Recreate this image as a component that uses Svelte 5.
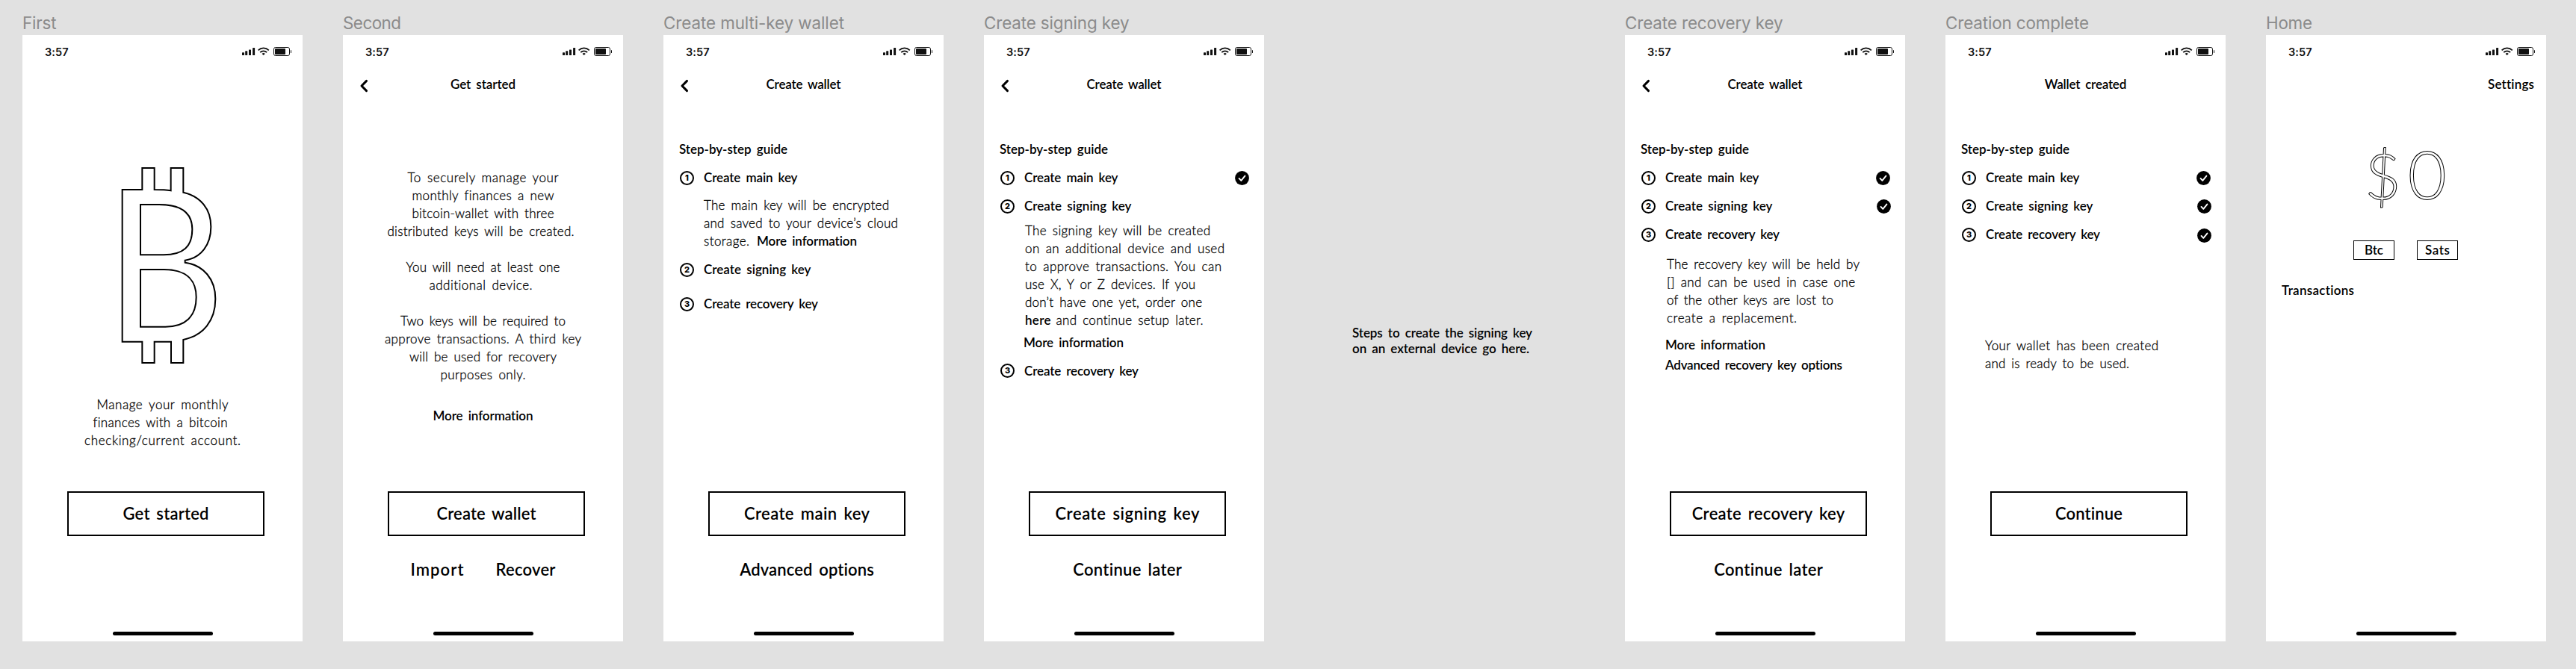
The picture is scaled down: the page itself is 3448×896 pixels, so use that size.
<script>
  // Spreads the letters of a line so that it fills the given width.
  function fit(node, width) {
    if (!width) return;
    const natural = node.getBoundingClientRect().width;
    const gaps = Math.max(1, node.textContent.length - 1);
    const spacing = (width - natural) / gaps;
    node.style.letterSpacing = `${spacing}px`;
    node.style.marginRight = `${-spacing}px`;
  }

  const guide = { kind: 'heading', gap: 51, x: 21, text: 'Step-by-step guide', w: 145 };
  const step = (n, gap, check = 0, drop = 0) => ({
    kind: 'step', n, gap, check, drop,
    text: ['Create main key', 'Create signing key', 'Create recovery key'][n - 1],
    w: [125.5, 143.5, 153][n - 1]
  });
  const para = (gap, x, ...lines) => ({ kind: 'para', gap, x, lines });
  const link = (gap, x, text, w) => ({ kind: 'heading', gap, x, text, w });
  const centred = (gap, ...lines) => ({ kind: 'centred', gap, lines });
  const line = (t, w, trail = false) => ({ trail, runs: [{ t, w }] });
  const blank = { trail: false, runs: [] };

  const screens = [
    {
      name: 'First', nameW: 45.5,
      blocks: [
        { kind: 'logo', gap: 86.3 },
        centred(42,
          line('Manage your monthly', 176),
          line('finances with a bitcoin', 180, true),
          line('checking/current account.', 209))
      ],
      button: ['Get started', 115], links: []
    },
    {
      name: 'Second', nameW: 78, back: true, title: ['Get started', 87],
      blocks: [
        centred(89.4,
          line('To securely manage your', 202),
          line('monthly finances a new', 190),
          line('bitcoin-wallet with three', 190),
          line('distributed keys will be created.', 250, true),
          blank,
          line('You will need at least one', 206),
          line('additional device.', 138, true),
          blank,
          line('Two keys will be required to', 221),
          line('approve transactions. A third key', 263),
          line('will be used for recovery', 197),
          line('purposes only.', 114)),
        { ...centred(30.4, line('More information', 134)), strong: true }
      ],
      button: ['Create wallet', 133], links: [['Import', 71], ['Recover', 80]]
    },
    {
      name: 'Create multi-key wallet', nameW: 242, back: true, title: ['Create wallet', 100],
      blocks: [
        guide,
        step(1, 14.4),
        para(12.2, 54,
          line('The main key will be encrypted', 248),
          line('and saved to your device’s cloud', 260),
          { runs: [{ t: 'storage.', w: 61 }, { t: 'More information', w: 134, b: true, lead: 10 }] }),
        step(2, 14.8),
        step(3, 22)
      ],
      button: ['Create main key', 168], links: [['Advanced options', 180]]
    },
    {
      name: 'Create signing key', nameW: 194.5, back: true, title: ['Create wallet', 100],
      blocks: [
        guide,
        step(1, 14.4, 346),
        step(2, 14),
        para(8.3, 55,
          line('The signing key will be created', 248),
          line('on an additional device and used', 267),
          line('to approve transactions. You can', 263),
          line('use X, Y or Z devices. If you', 228),
          line('don’t have one yet, order one', 237),
          { runs: [{ t: 'here', w: 34.5, b: true }, { t: 'and continue setup later.', w: 197, lead: 7 }] }),
        link(6.7, 53, 'More information', 134),
        step(3, 13.6)
      ],
      button: ['Create signing key', 193], links: [['Continue later', 146]]
    },
    { note: [['Steps to create the signing key', 241], ['on an external device go here.', 237]] },
    {
      name: 'Create recovery key', nameW: 211.5, back: true, title: ['Create wallet', 100],
      blocks: [
        guide,
        step(1, 14.4, 346),
        step(2, 14, 347),
        step(3, 14),
        para(15.6, 56,
          line('The recovery key will be held by', 258),
          line('[] and can be used in case one', 252),
          line('of the other keys are lost to', 223),
          line('create a replacement.', 174)),
        link(12.2, 54, 'More information', 134),
        link(3, 54, 'Advanced recovery key options', 237)
      ],
      button: ['Create recovery key', 204.5], links: [['Continue later', 146]]
    },
    {
      name: 'Creation complete', nameW: 192, title: ['Wallet created', 109.5],
      blocks: [
        guide,
        step(1, 14.4, 346),
        step(2, 14, 347),
        step(3, 14, 347, 1),
        para(124.5, 53,
          line('Your wallet has been created', 232),
          line('and is ready to be used.', 193))
      ],
      button: ['Continue', 90.5], links: []
    },
    {
      name: 'Home', nameW: 62, action: ['Settings', 62],
      blocks: [
        { kind: 'amount', gap: 44.8 },
        { kind: 'units', gap: 40.2 },
        link(29.4, 21, 'Transactions', 97)
      ],
      links: []
    }
  ];
</script>

{#snippet fitted(text, w)}<span class="fit" use:fit={w}>{text}</span>{/snippet}

{#snippet textLine(l)}
  <div class="line" class:trail={l.trail}>
    {#each l.runs as r}<span class="run" class:strong={r.b} style:margin-left={r.lead ? `${r.lead}px` : null}>{@render fitted(r.t, r.w)}</span>{/each}
  </div>
{/snippet}

<main class="board">
  {#each screens as s}
    {#if s.note}
      <aside class="note">
        {#each s.note as [t, w]}<div>{@render fitted(t, w)}</div>{/each}
      </aside>
    {:else}
      <section class="frame">
        <h2 class="name">{@render fitted(s.name, s.nameW)}</h2>
        <div class="phone">
          <header class="status">
            <span class="time">{@render fitted('3:57', 31.5)}</span>
            <svg width="67" height="14" viewBox="0 0 67 14" fill="#111">
              <rect x="0" y="8.3" width="3" height="3.7" rx=".6" />
              <rect x="4.2" y="6.2" width="3" height="5.8" rx=".6" />
              <rect x="9" y="4.4" width="3" height="7.6" rx=".6" />
              <rect x="14.1" y="2" width="3" height="10" rx=".6" />
              <g fill="none" stroke="#111" stroke-width="1.8">
                <path d="M21.6 5.3a10.3 10.3 0 0 1 14.2 0" />
                <path d="M24.2 8.2a6.6 6.6 0 0 1 9 0" />
              </g>
              <path d="M28.7 12.1 26.6 9.9a3.2 3.2 0 0 1 4.2 0z" />
              <rect x="42.5" y="1.5" width="21" height="11" rx="2.2" fill="none" stroke="#111" />
              <rect x="44" y="3" width="14" height="8" rx=".8" />
              <rect x="65" y="5" width="1" height="4" rx=".5" />
            </svg>
          </header>
          <nav class="nav">
            {#if s.back}
              <svg class="back" width="12" height="18" viewBox="0 0 12 18" fill="none" stroke="#000" stroke-width="3" stroke-linecap="round" stroke-linejoin="round">
                <path d="M9.5 2.4 3 9l6.5 6.6" />
              </svg>
            {/if}
            {#if s.title}<span class="title">{@render fitted(s.title[0], s.title[1])}</span>{/if}
            {#if s.action}<span class="action">{@render fitted(s.action[0], s.action[1])}</span>{/if}
          </nav>

          <div class="content">
            {#each s.blocks as b}
              <div class="block" style:padding-top={`${b.gap}px`} style:padding-left={b.x ? `${b.x}px` : null}>
                {#if b.kind === 'logo'}
                  <svg class="logo" width="128.33" height="265" viewBox="487 670 385 795" fill="none" stroke="#000" stroke-width="6">
                    <path d="M492 763H572V676H621V763C650 763 670 764 687 767V676H737V774C806 790 848 840 848 912C848 985 808 1037 744 1047V1056C818 1066 866 1122 866 1202C866 1290 817 1349 737 1366V1459H688V1374H621V1459H572V1374H492Z" />
                    <path d="M565 823H640C730 823 773 856 773 922C773 991 738 1025 658 1025H565Z" />
                    <path d="M565 1084H660C746 1084 789 1124 789 1195C789 1272 746 1314 665 1314H565Z" />
                  </svg>
                {:else if b.kind === 'heading'}
                  <div class="line strong">{@render fitted(b.text, b.w)}</div>
                {:else if b.kind === 'para'}
                  {#each b.lines as l}{@render textLine(l)}{/each}
                {:else if b.kind === 'centred'}
                  <div class="centred" class:strong={b.strong}>
                    {#each b.lines as l}{@render textLine(l)}{/each}
                  </div>
                {:else if b.kind === 'step'}
                  <div class="step strong">
                    <span class="number">{b.n}</span>
                    <span class="label">{@render fitted(b.text, b.w)}</span>
                    {#if b.check}
                      <svg class="check" style:margin-right={`${365.7 - b.check}px`} style:margin-top={`${b.drop * 2}px`} width="19" height="19" viewBox="0 0 19 19">
                        <circle cx="9.5" cy="9.5" r="9.4" />
                        <path d="m5.5 9.9 2.8 3 5.1-6.3" fill="none" stroke="#fff" stroke-width="1.9" stroke-linecap="round" stroke-linejoin="round" />
                      </svg>
                    {/if}
                  </div>
                {:else if b.kind === 'amount'}
                  <div class="amount"><span class="currency">$</span><span>0</span></div>
                {:else if b.kind === 'units'}
                  <div class="units">
                    <span class="unit">{@render fitted('Btc', 25)}</span>
                    <span class="unit">{@render fitted('Sats', 33)}</span>
                  </div>
                {/if}
              </div>
            {/each}
          </div>

          {#if s.button}<button class="primary">{@render fitted(s.button[0], s.button[1])}</button>{/if}
          <div class="links" class:pair={s.links.length > 1}>
            {#each s.links as l}<span>{@render fitted(l[0], l[1])}</span>{/each}
          </div>
          <div class="indicator"></div>
        </div>
      </section>
    {/if}
  {/each}
</main>

<style>
  :global(body) { background: #e1e1e1; }
  .board {
    display: flex;
    gap: 54px;
    width: 3448px;
    height: 896px;
    padding-left: 30px;
    box-sizing: border-box;
    overflow: hidden;
    background: #e1e1e1;
    color: #000;
    font-family: Lato, "Open Sans", sans-serif;
    font-size: 17px;
    font-weight: 300;
    line-height: 24px;
    word-spacing: 3px;
    font-variant-ligatures: none;
  }
  .fit { display: inline-block; white-space: pre; }
  .run { -webkit-text-stroke: 0.3px #000; }
  .strong, .strong .run { font-weight: 600; -webkit-text-stroke: 0; }
  .frame { width: 375px; flex: none; }
  .name {
    height: 47px;
    margin: 0;
    box-sizing: border-box;
    padding-top: 18px;
    font: 400 22.4px/26px Inter, sans-serif;
    word-spacing: 0;
    color: #8b8b8b;
    white-space: nowrap;
  }
  .phone { display: flex; flex-direction: column; height: 812px; background: #fff; }
  .status {
    display: flex;
    justify-content: space-between;
    align-items: flex-start;
    height: 45px;
    box-sizing: border-box;
    padding: 15px 14px 0 30px;
  }
  .time { font: 600 14.5px/16px Inter, sans-serif; color: #111; word-spacing: 0; }
  .nav {
    display: grid;
    grid-template-columns: 60px 1fr 60px;
    align-items: center;
    height: 45px;
    padding: 0 16px 0 22px;
    font-weight: 600;
  }
  .back { grid-column: 1; grid-row: 1; }
  .title { grid-column: 2; grid-row: 1; justify-self: center; margin-right: 6px; padding-bottom: 4px; }
  .action { grid-column: 3; grid-row: 1; justify-self: end; padding-bottom: 4px; }
  .content { height: 521px; flex: none; }
  .line { height: 24px; white-space: nowrap; display: flex; }
  .centred .line { justify-content: center; }
  .trail { padding-right: 6px; }
  .logo { display: block; margin-left: 132.3px; }
  .step { display: flex; align-items: center; height: 24px; padding-left: 22px; }
  .number {
    width: 19px;
    height: 19px;
    box-sizing: border-box;
    border: 2px solid #000;
    border-radius: 50%;
    font: 800 11px/15px Inter, sans-serif;
    text-align: center;
  }
  .label { margin-left: 13px; flex: 1; }
  .check { margin-left: auto; flex: none; }
  .amount {
    display: flex;
    align-items: baseline;
    gap: 9px;
    height: 100px;
    padding-left: 132px;
    font-size: 90px;
    font-weight: 300;
    line-height: 100px;
    color: #fff;
    -webkit-text-stroke: 1px #000;
  }
  .currency { font-size: 84px; }
  .units { display: flex; gap: 30px; padding-left: 117px; font-weight: 600; }
  .unit {
    width: 55px;
    height: 26px;
    box-sizing: border-box;
    border: 1px solid #000;
    line-height: 24px;
    text-align: center;
  }
  .primary {
    align-self: flex-start;
    margin-left: 60px;
    width: 264px;
    height: 60px;
    padding: 0;
    border: 2px solid #000;
    background: #fff;
    color: #000;
    font: 600 22px/30px Lato, sans-serif;
    word-spacing: 3px;
  }
  .links {
    display: flex;
    justify-content: center;
    padding: 30px 0 0 9px;
    font: 600 22px/30px Lato, sans-serif;
  }
  .links.pair { gap: 43px; padding-left: 0; }
  .indicator { width: 134px; height: 5px; margin: auto 0 8px 121px; border-radius: 3px; background: #000; }
  .note { width: 375px; flex: none; box-sizing: border-box; padding: 435px 0 0 64px; font-weight: 600; line-height: 21px; }
</style>
